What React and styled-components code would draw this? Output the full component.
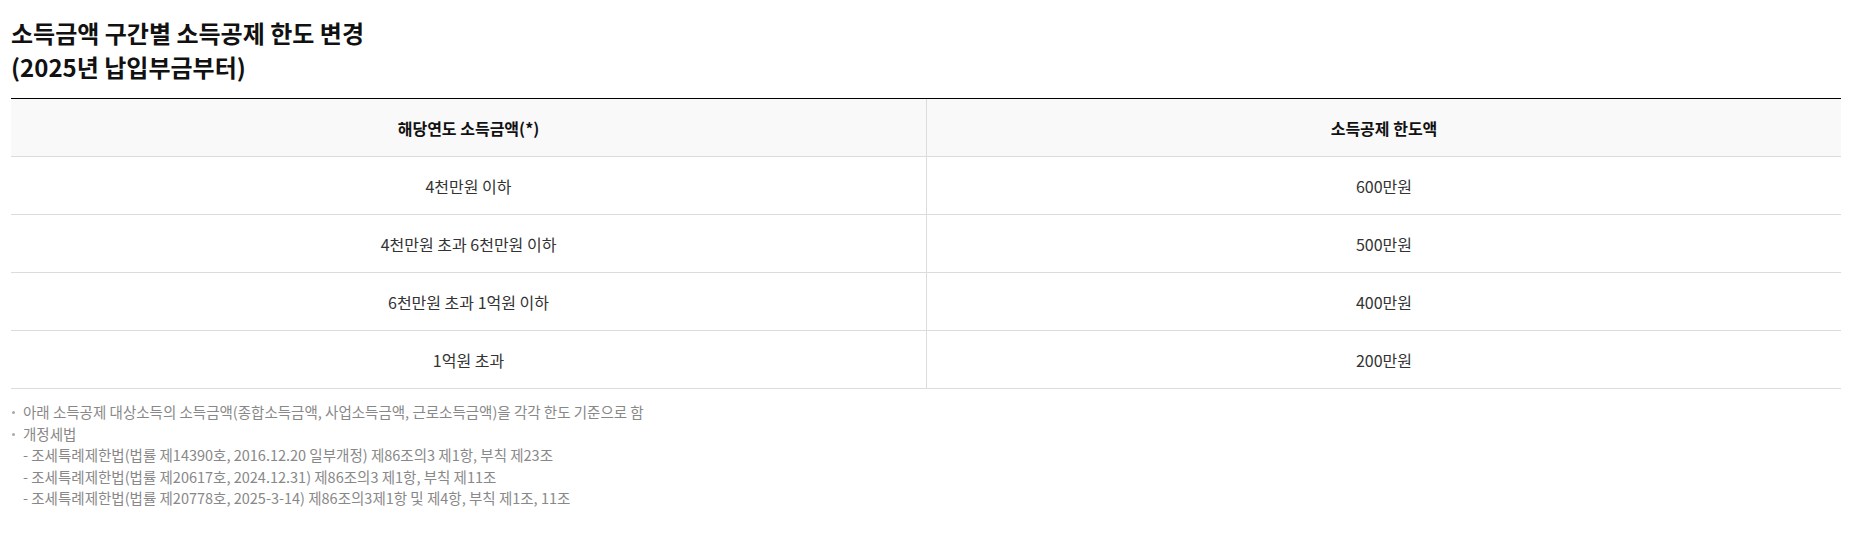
import styled, { createGlobalStyle } from "styled-components";

const GlobalStyle = createGlobalStyle`
  body {
    margin: 0;
    background: #fff;
    font-family: "Noto Sans CJK KR", "Noto Sans", sans-serif;
  }
`

const rows = [
  ["4천만원 이하", "600만원"],
  ["4천만원 초과 6천만원 이하", "500만원"],
  ["6천만원 초과 1억원 이하", "400만원"],
  ["1억원 초과", "200만원"],
]

const laws = [
  "조세특례제한법(법률 제14390호, 2016.12.20 일부개정) 제86조의3 제1항, 부칙 제23조",
  "조세특례제한법(법률 제20617호, 2024.12.31) 제86조의3 제1항, 부칙 제11조",
  "조세특례제한법(법률 제20778호, 2025-3-14) 제86조의3제1항 및 제4항, 부칙 제1조, 11조",
]

export default function App() {
  return (
    <>
      <GlobalStyle />
      <Page>
        <Titulo>
          소득금액 구간별 소득공제 한도 변경
          <br />
          (2025년 납입부금부터)
        </Titulo>

        <Tabela>
          <Linha $head>
            <Celula $head>해당연도 소득금액(*)</Celula>
            <Celula $head $divider>소득공제 한도액</Celula>
          </Linha>
          {rows.map(([faixa, limite]) => (
            <Linha key={faixa}>
              <Celula>{faixa}</Celula>
              <Celula $divider>{limite}</Celula>
            </Linha>
          ))}
        </Tabela>

        <Notas>
          <Nota $bullet>아래 소득공제 대상소득의 소득금액(종합소득금액, 사업소득금액, 근로소득금액)을 각각 한도 기준으로 함</Nota>
          <Nota $bullet>개정세법</Nota>
          {laws.map((lei) => (
            <Nota key={lei}>- {lei}</Nota>
          ))}
        </Notas>
      </Page>
    </>
  )
}

const Page = styled.div`
padding: 16px 8px 0 11px;
`

const Titulo = styled.h2`
margin: 0 0 14px;
font-size: 24px;
font-weight: 700;
line-height: 34px;
color: #111;
`

const Tabela = styled.div`
border-top: 1px solid #000;
`

const Linha = styled.div`
display: grid;
grid-template-columns: 1fr 1fr;
height: 58px;
box-sizing: border-box;
border-bottom: 1px solid #dcdcdc;
background: ${(p) => (p.$head ? "#f9f9f9" : "#fff")};
`

const Celula = styled.div`
display: flex;
align-items: center;
justify-content: center;
font-size: 16px;
font-weight: ${(p) => (p.$head ? 700 : 400)};
color: ${(p) => (p.$head ? "#111" : "#333")};
border-left: ${(p) => (p.$divider ? "1px solid #dcdcdc" : "none")};
`

const Notas = styled.ul`
list-style: none;
margin: 12px 0 0;
padding: 0;
`

const Nota = styled.li`
position: relative;
padding-left: 12px;
font-size: 14.5px;
line-height: 21.5px;
color: #888;
&::before {
  content: "";
  display: ${(p) => (p.$bullet ? "block" : "none")};
  position: absolute;
  left: 1px;
  top: 10px;
  width: 3px;
  height: 3px;
  border-radius: 50%;
  background: #aaa;
}
`
